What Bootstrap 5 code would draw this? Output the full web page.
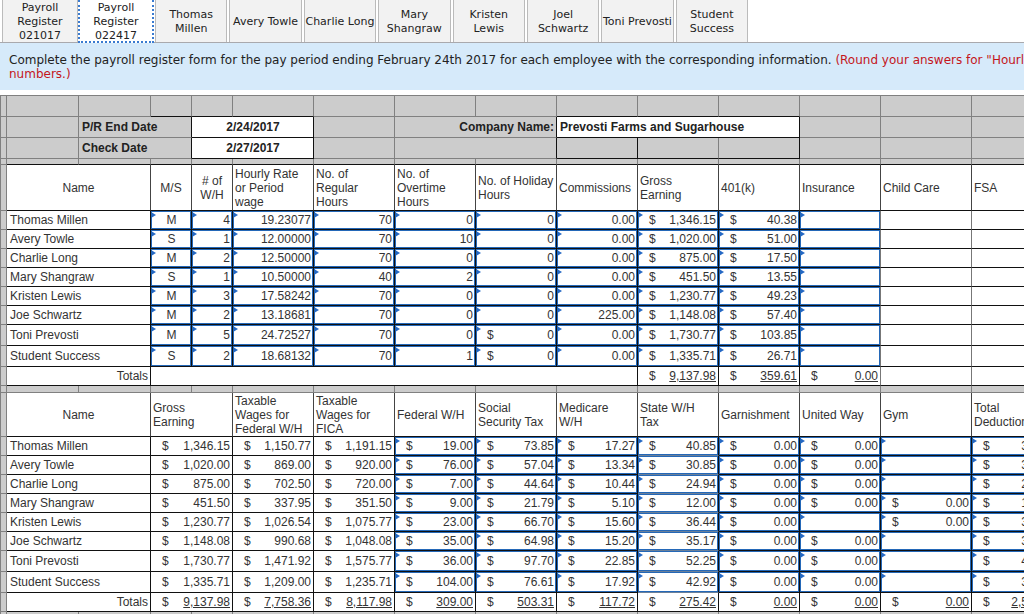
<!DOCTYPE html>
<html lang="en">
<head>
<meta charset="utf-8">
<meta name="viewport" content="width=device-width, initial-scale=1">
<title>Payroll Register 022417</title>
<link href="https://cdn.jsdelivr.net/npm/bootstrap@5.3.0/dist/css/bootstrap.min.css" rel="stylesheet">
<style>
  body { background: #fff; font-family: "DejaVu Sans", Verdana, sans-serif; color: #222; }
  .sheet-tabs { height: 43px; padding-left: 2px; border-bottom: 1px solid #a9a9ad; }
  .sheet-tabs .tab-set { width: 746px; }
  .sheet-tab { flex: 1 1 0; min-width: 0; padding: 1px 0 0; border: solid #bbb; border-width: 0 1px; background: #f2f2f2; color: #222; font-size: 11px; line-height: 14px; margin-left: 2px; }
  .sheet-tab.wide { flex: 0 0 76px; margin-left: 0; }
  .sheet-tab.wide + .sheet-tab:not(.wide) { margin-left: 1px; }
  .sheet-tab.active { background: #fff; border: 2px dotted #3a7bd0; border-top: 0; margin-bottom: -1px; }
  .task-text { background: #d6eafa; font-size: 12px; line-height: 14px; padding: 10px 0 9px 9px; min-height: 47px; margin-bottom: 5px; white-space: nowrap; }
  .task-text .hint { color: #c4161c; }

  .sheet { table-layout: fixed; border-collapse: separate; border-spacing: 0; width: 1061px; border: solid #808080; border-width: 1px 0 0 1px; font: 12px/14px "Liberation Sans", Arial, sans-serif; color: #333; }
  .c-gut { width: 6px; } .c-72 { width: 72px; } .c-41 { width: 41px; } .c-81 { width: 81px; } .c-91 { width: 91px; }
  .sheet td, .sheet th { border: solid #111; border-width: 0 1px 1px 0; padding: 0 2px 0 3px; font-weight: 400; vertical-align: middle; background-color: #fff; white-space: nowrap; }
  .sheet .head th { padding-left: 2px; border-right-color: #444; }
  .sheet .gap { background-color: #ccc; border-color: #808080; padding: 0; }
  .sheet .lbl { background-color: #ccc; border-color: #808080; font-weight: 700; color: #222; }
  .sheet .box { font-weight: 700; color: #222; }
  .sheet .kb { border-bottom-color: #111; }
  .sheet .kr { border-right-color: #111; }
  .r6 { height: 6px; } .r7 { height: 7px; } .r19 { height: 19px; } .r21 { height: 21px; } .r44 { height: 44px; } .r46 { height: 46px; }
  .r6 td, .r7 td { line-height: 0; }
  .sheet .seam { border-right-color: #777; }
  .sheet .fill {
    box-shadow: inset 0 0 0 1px #2468b8;
    background: #fff url("data:image/svg+xml,%3Csvg xmlns='http://www.w3.org/2000/svg' width='5' height='7'%3E%3Cpath d='M0 1L5 4L0 7Z' fill='%232468c4'/%3E%3C/svg%3E") no-repeat 0 0;
  }
  .sheet .soft { border-bottom-color: #6c8098; }
  .sheet .money > div { padding-left: 8px; }
</style>
</head>
<body>
<div class="vh-100 overflow-hidden">
  <nav class="sheet-tabs" aria-label="Sheets">
    <div class="tab-set d-flex h-100">
      <button type="button" class="sheet-tab wide">Payroll<br>Register<br>021017</button>
      <button type="button" class="sheet-tab wide active" aria-current="page">Payroll<br>Register<br>022417</button>
      <button type="button" class="sheet-tab">Thomas<br>Millen</button>
      <button type="button" class="sheet-tab text-nowrap">Avery Towle</button>
      <button type="button" class="sheet-tab text-nowrap">Charlie Long</button>
      <button type="button" class="sheet-tab">Mary<br>Shangraw</button>
      <button type="button" class="sheet-tab">Kristen<br>Lewis</button>
      <button type="button" class="sheet-tab">Joel<br>Schwartz</button>
      <button type="button" class="sheet-tab text-nowrap">Toni Prevosti</button>
      <button type="button" class="sheet-tab">Student<br>Success</button>
    </div>
  </nav>
  <div class="task-text overflow-hidden">Complete the payroll register form for the pay period ending February 24th 2017 for each employee with the corresponding information. <span class="hint">(Round your answers for "Hourly<br>numbers.)</span></div>

  <table class="sheet">
    <colgroup>
      <col class="c-gut"><col class="c-72"><col class="c-72"><col class="c-41"><col class="c-41">
      <col class="c-81"><col class="c-81"><col class="c-81"><col class="c-81"><col class="c-81"><col class="c-81"><col class="c-81"><col class="c-81"><col class="c-91"><col>
    </colgroup>
    <tbody>
      <tr class="r21"><td class="gap"></td><td class="gap"></td><td class="gap"></td><td class="gap kb"></td><td class="gap kb"></td><td class="gap kb"></td><td class="gap"></td><td class="gap"></td><td class="gap"></td><td class="gap kb"></td><td class="gap kb"></td><td class="gap kb"></td><td class="gap"></td><td class="gap"></td><td class="gap"></td></tr>
      <tr class="r21"><td class="gap"></td><td class="gap"></td><th scope="row" class="lbl kr" colspan="2">P/R End Date</th><td class="box text-center" colspan="2">2/24/2017</td><td class="gap"></td><th scope="row" class="lbl kr text-end" colspan="2">Company Name:</th><td class="box" colspan="3">Prevosti Farms and Sugarhouse</td><td class="gap"></td><td class="gap"></td><td class="gap"></td></tr>
      <tr class="r21"><td class="gap"></td><td class="gap"></td><th scope="row" class="lbl kr" colspan="2">Check Date</th><td class="box text-center" colspan="2">2/27/2017</td><td class="gap"></td><td class="gap kr" colspan="2"></td><td class="gap kb kr"></td><td class="gap kb"></td><td class="gap kb kr"></td><td class="gap"></td><td class="gap"></td><td class="gap"></td></tr>
      <tr class="r6"><td class="gap"></td><td class="gap kb"></td><td class="gap kb"></td><td class="gap kb"></td><td class="gap kb"></td><td class="gap kb"></td><td class="gap kb"></td><td class="gap kb"></td><td class="gap kb"></td><td class="gap kb"></td><td class="gap kb"></td><td class="gap kb"></td><td class="gap kb"></td><td class="gap kb"></td><td class="gap kb"></td></tr>
      <tr class="r46 head"><td class="gap"></td><th scope="col" colspan="2" class="text-center">Name</th><th scope="col" class="text-center">M/S</th><th scope="col" class="text-center"># of<br>W/H</th><th scope="col">Hourly Rate<br>or Period<br>wage</th><th scope="col">No. of<br>Regular<br>Hours</th><th scope="col">No. of<br>Overtime<br>Hours</th><th scope="col">No. of Holiday<br>Hours</th><th scope="col">Commissions</th><th scope="col">Gross<br>Earning</th><th scope="col">401(k)</th><th scope="col">Insurance</th><th scope="col" class="seam">Child Care</th><th scope="col">FSA</th></tr>
    </tbody>
    <tbody id="earnings"></tbody>
    <tbody>
      <tr class="r19"><td class="gap"></td><th scope="row" colspan="2" class="text-end">Totals</th><td colspan="7"></td><td class="money"><div class="d-flex justify-content-between"><span>$</span><u>9,137.98</u></div></td><td class="money"><div class="d-flex justify-content-between"><span>$</span><u>359.61</u></div></td><td class="money seam"><div class="d-flex justify-content-between"><span>$</span><u>0.00</u></div></td><td class="seam"></td><td></td></tr>
      <tr class="r7"><td class="gap"></td><td class="gap"></td><td class="gap"></td><td class="gap"></td><td class="gap"></td><td class="gap"></td><td class="gap"></td><td class="gap"></td><td class="gap"></td><td class="gap"></td><td class="gap"></td><td class="gap"></td><td class="gap"></td><td class="gap"></td><td class="gap"></td></tr>
      <tr class="r44 head"><td class="gap"></td><th scope="col" colspan="2" class="text-center">Name</th><th scope="col" colspan="2">Gross<br>Earning</th><th scope="col">Taxable<br>Wages for<br>Federal W/H</th><th scope="col">Taxable<br>Wages for<br>FICA</th><th scope="col">Federal W/H</th><th scope="col">Social<br>Security Tax</th><th scope="col">Medicare<br>W/H</th><th scope="col">State W/H<br>Tax</th><th scope="col">Garnishment</th><th scope="col">United Way</th><th scope="col" class="seam">Gym</th><th scope="col">Total<br>Deductions</th></tr>
    </tbody>
    <tbody id="deductions"></tbody>
    <tbody>
      <tr class="r6"><td class="gap"></td><td class="gap"></td><td class="gap"></td><td class="gap"></td><td class="gap"></td><td class="gap"></td><td class="gap"></td><td class="gap"></td><td class="gap"></td><td class="gap"></td><td class="gap"></td><td class="gap"></td><td class="gap"></td><td class="gap"></td><td class="gap"></td></tr>
    </tbody>
  </table>
</div>
<script>
  // name, M/S, W/H, rate, regular, overtime, holiday, commissions, gross, 401(k)
  const earnings = [
    ["Thomas Millen","M","4","19.23077","70","0","0","0.00","$1,346.15","$40.38"],
    ["Avery Towle","S","1","12.00000","70","10","0","0.00","$1,020.00","$51.00"],
    ["Charlie Long","M","2","12.50000","70","0","0","0.00","$875.00","$17.50"],
    ["Mary Shangraw","S","1","10.50000","40","2","0","0.00","$451.50","$13.55"],
    ["Kristen Lewis","M","3","17.58242","70","0","0","0.00","$1,230.77","$49.23"],
    ["Joe Schwartz","M","2","13.18681","70","0","0","225.00","$1,148.08","$57.40"],
    ["Toni Prevosti","M","5","24.72527","70","0","$0","0.00","$1,730.77","$103.85"],
    ["Student Success","S","2","18.68132","70","1","$0","0.00","$1,335.71","$26.71"]
  ];
  // name, gross, taxable federal, taxable FICA, federal, social security, medicare, state, garnishment, United Way, gym, total
  const deductions = [
    ["Thomas Millen","$1,346.15","$1,150.77","$1,191.15","$19.00","$73.85","$17.27","$40.85","$0.00","$0.00","","$300.00"],
    ["Avery Towle","$1,020.00","$869.00","$920.00","$76.00","$57.04","$13.34","$30.85","$0.00","$0.00","","$300.00"],
    ["Charlie Long","$875.00","$702.50","$720.00","$7.00","$44.64","$10.44","$24.94","$0.00","$0.00","","$200.00"],
    ["Mary Shangraw","$451.50","$337.95","$351.50","$9.00","$21.79","$5.10","$12.00","$0.00","$0.00","$0.00","$100.00"],
    ["Kristen Lewis","$1,230.77","$1,026.54","$1,075.77","$23.00","$66.70","$15.60","$36.44","$0.00","","$0.00","$300.00"],
    ["Joe Schwartz","$1,148.08","$990.68","$1,048.08","$35.00","$64.98","$15.20","$35.17","$0.00","$0.00","","$300.00"],
    ["Toni Prevosti","$1,730.77","$1,471.92","$1,575.77","$36.00","$97.70","$22.85","$52.25","$0.00","$0.00","","$400.00"],
    ["Student Success","$1,335.71","$1,209.00","$1,235.71","$104.00","$76.61","$17.92","$42.92","$0.00","$0.00","","$300.00"]
  ];
  const totals = ["Totals","$9,137.98","$7,758.36","$8,117.98","$309.00","$503.31","$117.72","$275.42","$0.00","$0.00","$0.00","$2,500.00"];

  const cell = (text, cls = "", span = 1, tag = "span") => {
    const open = c => `<td class="${c} ${cls}"${span > 1 ? ` colspan="${span}"` : ""}>`;
    return text.startsWith("$")
      ? open("money") + `<div class="d-flex justify-content-between"><span>$</span><${tag}>${text.slice(1)}</${tag}></div></td>`
      : open("text-end") + text + "</td>";
  };
  const row = (i, inner) => `<tr class="${i === 6 || i === 7 ? "r21" : "r19"}"><td class="gap"></td>${inner}</tr>`;

  document.getElementById("earnings").innerHTML = earnings.map((r, i) => row(i,
    `<th scope="row" colspan="2">${r[0]}</th><td class="text-center fill">${r[1]}</td>` +
    r.slice(2).map(v => cell(v, "fill")).join("") +
    cell("", "fill seam") + `<td class="seam"></td><td></td>`)).join("");

  document.getElementById("deductions").innerHTML = deductions.map((r, i) => row(i,
    `<th scope="row" colspan="2">${r[0]}</th>` +
    r.slice(1).map((v, k) => cell(v, k < 3 ? "" : k === 6 ? "fill soft" : "fill", k ? 1 : 2)).join(""))).join("") +
    row(8, `<th scope="row" colspan="2" class="text-end">${totals[0]}</th>` +
    totals.slice(1).map((v, k) => cell(v, "", k ? 1 : 2, "u")).join(""));
</script>
<script src="https://cdn.jsdelivr.net/npm/bootstrap@5.3.0/dist/js/bootstrap.bundle.min.js"></script>
</body>
</html>
